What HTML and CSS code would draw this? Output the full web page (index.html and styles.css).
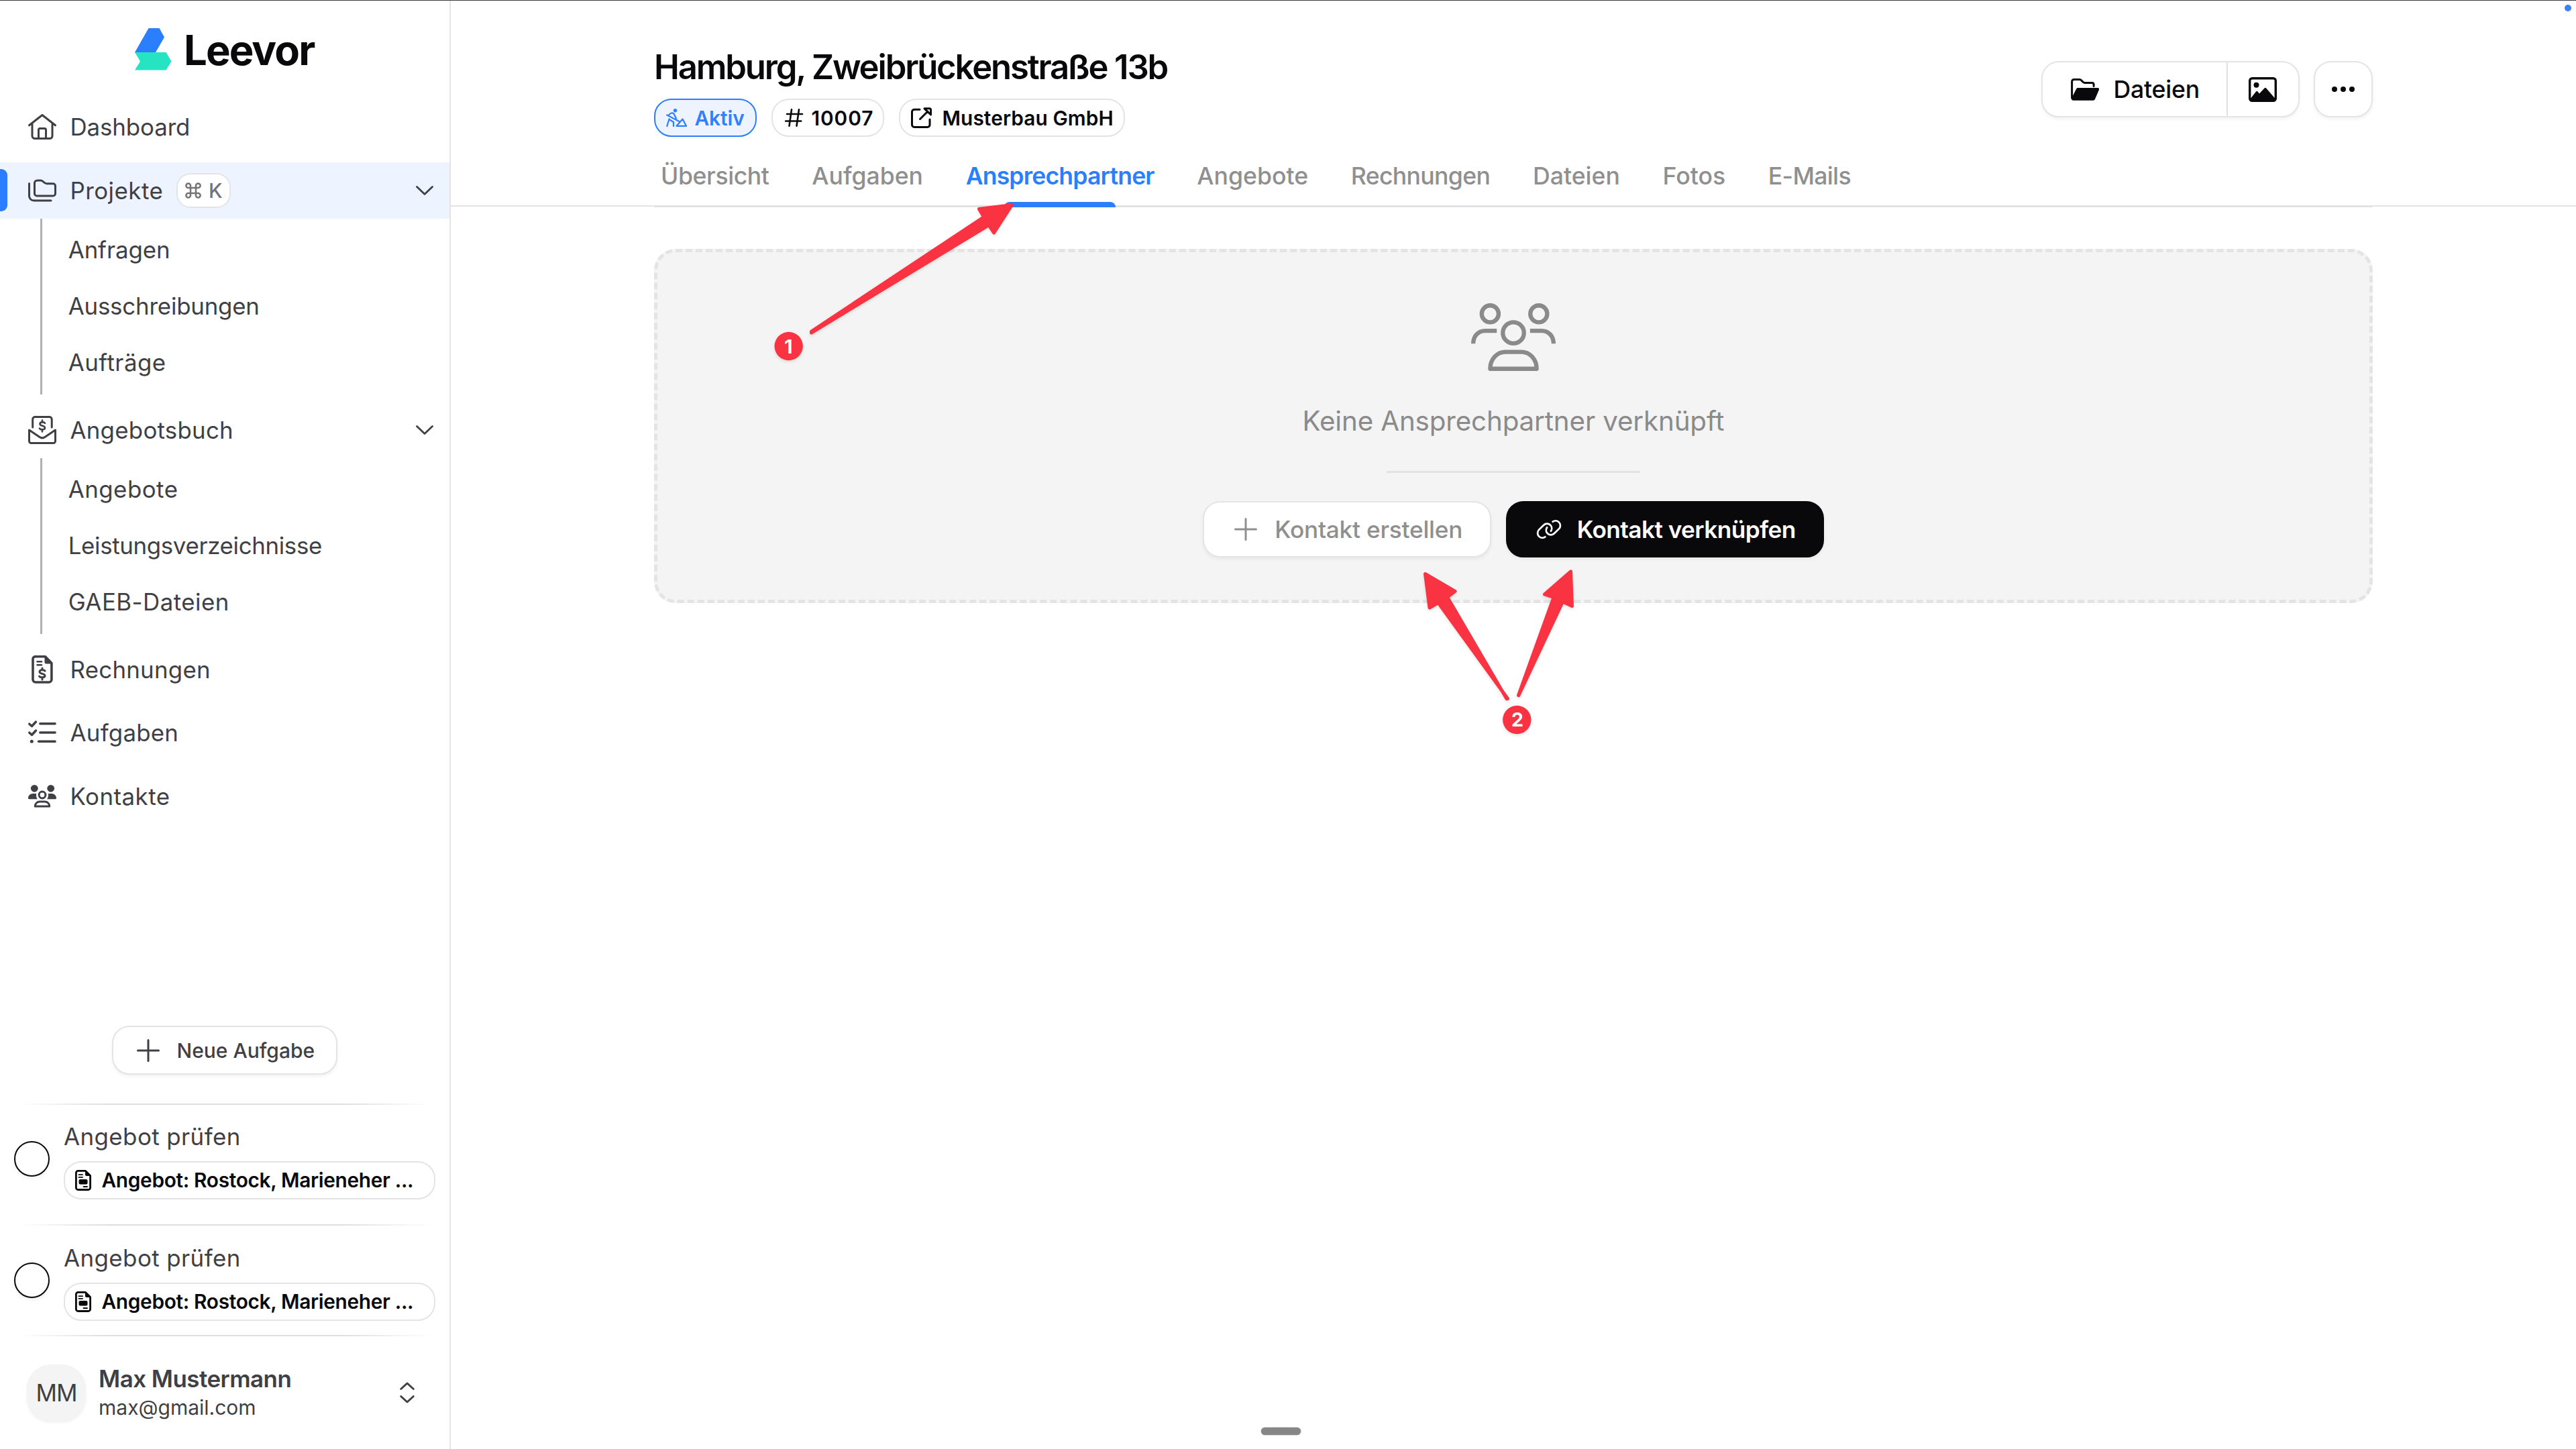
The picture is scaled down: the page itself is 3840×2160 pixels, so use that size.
FILE: index.html
```
<!DOCTYPE html>
<html lang="de">
<head>
<meta charset="utf-8">
<title>Leevor</title>
<link rel="stylesheet" href="styles.css">
</head>
<body>
<svg class="defs" aria-hidden="true">
  <symbol id="i-chevron" viewBox="0 0 26 14"><path d="M1.5 1.5 13 12.5 24.5 1.5"/></symbol>
  <symbol id="i-plus" viewBox="0 0 34 34"><path d="M17 1.5v31M1.5 17h31"/></symbol>
  <symbol id="i-file" viewBox="0 0 24 31">
    <path d="M4 1.4H15.500L22.600 8.500V26.500a3 3 0 0 1-3 3H4.400a3 3 0 0 1-3-3V4.400a3 3 0 0 1 3-3Z"/>
    <path class="solid" d="M15 1v6a2 2 0 0 0 2 2h6Z"/>
    <path d="M5.500 7.200h5.500M5.500 10.900h5.500M12.500 25h5.500" stroke-width="1.800"/>
    <rect class="solid" x="5.500" y="14" width="13" height="7.500" rx="2"/>
  </symbol>
</svg>

<aside class="sidebar">
  <div class="brand">
    <svg class="brand-mark" viewBox="0 0 54.500 62.500">
      <path fill="#2b7fff" d="M20.500 0h16l7.500 13.500L31 36H0Z"/>
      <path fill="#26e3c2" d="M0 36h46.500l8 13.500-8 13H0l8-13Z"/>
    </svg>
    <span class="brand-name">Leevor</span>
  </div>

  <nav class="nav">
    <a class="nav-row">
      <svg class="icon" viewBox="0 0 42 42"><path d="M1.500 18.800 21 3.500l19.500 15.300M6 16v18.500a4 4 0 0 0 4 4h22a4 4 0 0 0 4-4V16M15.500 38V25.500a2 2 0 0 1 2-2h7a2 2 0 0 1 2 2V38"/></svg>
      <span>Dashboard</span>
    </a>
    <div class="nav-group">
      <a class="nav-row active">
        <svg class="icon" viewBox="0 0 42 42"><path d="M1.500 10.500V29a7 7 0 0 0 7 7H34M9.500 10a4 4 0 0 1 4-4h5.500c3.500 0 4.500 4.800 8.500 4.800H37a3.500 3.500 0 0 1 3.500 3.500V25.500a3.500 3.500 0 0 1-3.500 3.500H13a3.500 3.500 0 0 1-3.500-3.500Z"/></svg>
        <span class="track-2">Projekte</span>
        <kbd class="shortcut"><svg class="cmd" viewBox="0 0 24 24"><path d="M8 8H4.800a3.300 3.300 0 1 1 3.200-3.300v14.600A3.300 3.300 0 1 1 4.800 16h14.400a3.300 3.300 0 1 1-3.200 3.300V4.700A3.300 3.300 0 1 1 19.200 8Z"/></svg>K</kbd>
        <svg class="chevron"><use href="#i-chevron"/></svg>
      </a>
      <div class="subnav">
        <a>Anfragen</a>
        <a class="track-0">Ausschreibungen</a>
        <a class="track-2">Aufträge</a>
      </div>
    </div>
    <div class="nav-group">
      <a class="nav-row">
        <svg class="icon" viewBox="0 0 42 42">
          <path d="M6.700 17V5a3.500 3.500 0 0 1 3.500-3.500h21.500A3.500 3.500 0 0 1 35.200 5v12M1.500 21v16.500A3 3 0 0 0 4.500 40.500h33a3 3 0 0 0 3-3V21L25 31.500a7 7 0 0 1-8 0Z"/>
          <path d="M25 10.800c-1-1.800-7.500-2.300-7.500 1.200s7.500 2.200 7.500 5.800-6.700 3-8 .9M21 6.500v2.300M21 21v2.500" stroke-width="2.600"/>
        </svg>
        <span class="track-1">Angebotsbuch</span>
        <svg class="chevron"><use href="#i-chevron"/></svg>
      </a>
      <div class="subnav">
        <a class="track-2">Angebote</a>
        <a class="track-tight">Leistungsverzeichnisse</a>
        <a class="track-2">GAEB-Dateien</a>
      </div>
    </div>
    <a class="nav-row">
      <svg class="icon" viewBox="0 0 42 42">
        <path d="M9.500 1.800H25.500L34.900 11.500V36a4 4 0 0 1-4 4H11a4 4 0 0 1-4-4V5.500a3.700 3.700 0 0 1 3.700-3.700Z" stroke-width="3.600"/>
        <path class="solid" d="M24.500 1v9a2.500 2.500 0 0 0 2.500 2.500h9Z"/>
        <path d="M13.500 9.300h6.500M13.500 14.300h6.500" stroke-width="2.600"/>
        <path d="M25 23.200c-1-2-8-2.500-8 1.200s8 2.200 8 5.800-7 3-8.500.9M21 19v2M21 34v2" stroke-width="3"/>
      </svg>
      <span class="track-1">Rechnungen</span>
    </a>
    <a class="nav-row">
      <svg class="icon" viewBox="0 0 42 42">
        <path d="M17.800 7.800h22.300M17.800 21h22.300M15.500 34.200h24.600M1.800 8.200l3.700 3.300 6-6.500M1.800 21.200l3.700 3.300 6-6.500" stroke-width="3.500"/>
        <circle class="solid" cx="5.300" cy="34.200" r="2.500"/>
      </svg>
      <span class="track-1">Aufgaben</span>
    </a>
    <a class="nav-row">
      <svg class="icon" viewBox="0 0 42 42">
        <circle class="solid" cx="9.300" cy="9.300" r="5.400"/><circle class="solid" cx="33.700" cy="9.300" r="5.400"/>
        <path class="solid" d="M1.300 25.200C.3 25.200 0 24.600 0 24c0-4 3-7 7-7h5.200c-.8 3.500.2 6 1.700 8.200ZM40.700 25.200c1 0 1.300-.6 1.300-1.200 0-4-3-7-7-7h-5.200c.8 3.500-.2 6-1.700 8.200Z"/>
        <circle cx="21" cy="19" r="4.900"/>
        <path d="M10.300 36c0-4 3-7 7-7h7.400c4 0 7 3 7 7Z"/>
      </svg>
      <span class="track-2">Kontakte</span>
    </a>
  </nav>

  <div class="tasks">
    <button class="btn new-task"><svg class="plus"><use href="#i-plus"/></svg>Neue Aufgabe</button>
    <div class="task">
      <span class="check"></span>
      <div class="task-body">
        <span class="task-title">Angebot prüfen</span>
        <span class="pill doc"><svg><use href="#i-file"/></svg>Angebot: Rostock, Marieneher ...</span>
      </div>
    </div>
    <div class="task last">
      <span class="check"></span>
      <div class="task-body">
        <span class="task-title">Angebot prüfen</span>
        <span class="pill doc"><svg><use href="#i-file"/></svg>Angebot: Rostock, Marieneher ...</span>
      </div>
    </div>
    <div class="user">
      <span class="avatar">MM</span>
      <div class="user-text">
        <span class="user-name">Max Mustermann</span>
        <span class="user-mail">max@gmail.com</span>
      </div>
      <svg class="updown" viewBox="0 0 22 32"><path d="M1.700 10.500 11 2l9.300 8.500M1.700 21.500 11 30l9.300-8.500"/></svg>
    </div>
  </div>
</aside>

<main class="main">
  <header class="header">
    <div class="container head-row">
      <div>
        <h1 class="title">Hamburg, Zweibrückenstraße 13b</h1>
        <div class="pills">
          <span class="pill status">
            <svg viewBox="0 0 31 27"><circle class="solid" cx="13.500" cy="2.800" r="2.700"/><path d="M3.500 10C5.500 6.700 9 5.500 11.300 7.300L15 14.500M1.200 9.500 19 18.700M4.500 15.500 1.300 26M5.500 16.500 11 20v6M15.500 25.800 24.500 15.500 30 25.800Z"/></svg>Aktiv</span>
          <span class="pill number">
            <svg viewBox="0 0 27 27"><path d="M10 1.300 6.500 25.700M21 1.300 17.500 25.700M3 8h23M1.200 18.500h23"/></svg>10007</span>
          <span class="pill customer">
            <svg viewBox="0 0 31 31"><path d="M13 3.300H5a3.500 3.500 0 0 0-3.500 3.500V26a3.500 3.500 0 0 0 3.500 3.500H24.500A3.500 3.500 0 0 0 28 26V18M13.500 17.500 25 6M20 1.800h8a1.500 1.500 0 0 1 1.500 1.500V11Z"/></svg>Musterbau GmbH</span>
        </div>
      </div>
      <div class="actions">
        <div class="btn split">
          <span class="seg files"><svg viewBox="0 0 42 33"><path d="M1.600 29V4.500a3 3 0 0 1 3-3h8.500c3.500 0 4 5 7.500 5h11a2.500 2.500 0 0 1 2.500 2.500v2.500"/><path class="solid" d="M10.500 14H40c1.700 0 2.500 1.400 2 2.800l-6 14c-.5 1.300-1.500 2-3 2H4C1.500 32.800.3 31 1 29.500L8 15.700C8.500 14.500 9.300 14 10.500 14Z"/></svg>Dateien</span>
          <span class="seg image"><svg viewBox="0 0 42 37"><rect x="1.700" y="1.700" width="38.600" height="33.600" rx="3.500"/><circle class="solid" cx="11.500" cy="11.700" r="4"/><path class="solid" d="M2 33 11 21.500c.7-1 1.800-1 2.500 0L16 24.500 23.500 16.500c.8-1 2-1 2.700 0L40 32.500V35H3Z"/></svg></span>
        </div>
        <div class="btn more"><i></i><i></i><i></i></div>
      </div>
    </div>
    <nav class="container tabs">
      <a class="tab t1">Übersicht</a>
      <a class="tab">Aufgaben</a>
      <a class="tab current">Ansprechpartner</a>
      <a class="tab">Angebote</a>
      <a class="tab t2">Rechnungen</a>
      <a class="tab">Dateien</a>
      <a class="tab">Fotos</a>
      <a class="tab t2">E-Mails</a>
    </nav>
  </header>

  <section class="container empty">
    <svg class="empty-icon" viewBox="0 0 640 512"><circle cx="144" cy="80" r="64"/><circle cx="512" cy="80" r="64"/><circle cx="320" cy="224" r="80"/><path d="M16 306C16 246 56 208 106 208H194M624 306C624 246 584 208 534 208H446"/><path d="M144 496C144 425 194 368 260 368H380C446 368 496 425 496 496Z"/></svg>
    <p class="empty-text">Keine Ansprechpartner verknüpft</p>
    <hr class="divider">
    <div class="empty-actions">
      <button class="btn create"><svg class="plus"><use href="#i-plus"/></svg>Kontakt erstellen</button>
      <button class="btn link"><svg viewBox="0 0 640 512"><path d="M411 75c46-34 108-28 147 11 44 44 44 116 0 160L445 357c-44 44-115 44-159 0-39-39-44-100-12-145M229 437c-46 34-108 28-147-11-44-44-44-116 0-160L195 155c44-44 115-44 159 0 39 39 44 100 12 145"/></svg>Kontakt verknüpfen</button>
    </div>
  </section>
</main>

<svg class="annotations" viewBox="0 0 3840 2160">
  <g class="arrow">
    <path d="M1209.500 494 1466.500 323.500 1459.500 311.500 1508.500 305.500 1481.700 347 1474 335.500 1209.500 496Z"/>
    <path d="M2246 1041.700 2157.500 890 2169 881.500 2124.500 855.500 2131 906 2144 898.500 2247.500 1041.500Z"/>
    <path d="M2263.500 1036.500 2316 890.500 2302.500 886 2341.500 852 2343.500 903.500 2329.500 897 2263.800 1036.700Z"/>
  </g>
  <circle cx="1175.700" cy="516" r="21.200"/><circle cx="2261.300" cy="1073" r="21.200"/>
  <text x="1175.200" y="526.500">1</text><text x="2261.800" y="1083.300">2</text>
</svg>
<span class="dot"></span>
<span class="handle"></span>
</body>
</html>
```
FILE: styles.css
```
* { box-sizing: border-box; }

body {
  margin: 0;
  width: 3840px;
  height: 2160px;
  overflow: hidden;
  position: relative;
  display: flex;
  border-top: 1px solid #3a3840;
  background: #fff;
  color: #09090b;
  font-family: Inter, "Liberation Sans", sans-serif;
}

svg { display: block; flex: none; fill: none; stroke: currentColor; stroke-width: 3; stroke-linecap: round; stroke-linejoin: round; overflow: visible; }
.solid { fill: currentColor; stroke: none; }
.defs { position: absolute; width: 0; height: 0; }

button { margin: 0; font-family: inherit; color: inherit; }

.btn {
  display: flex;
  align-items: center;
  padding: 0;
  background: #fff;
  border: 2.6px solid #e4e4e7;
  border-radius: 26px;
  box-shadow: 0 3px 5px rgba(0, 0, 0, .05);
  white-space: nowrap;
}

.pill {
  display: flex;
  align-items: center;
  height: 57px;
  border: 2.6px solid #e4e4e7;
  border-radius: 26px;
  background: #fff;
  font-size: 29.8px;
  font-weight: 600;
  white-space: nowrap;
}

/* Sidebar */
.sidebar {
  width: 672px;
  flex: none;
  display: flex;
  flex-direction: column;
  border-right: 2px solid #e4e4e7;
  color: #3f3f46;
}

.brand { display: flex; height: 146px; padding: 41px 0 0 201px; gap: 18.5px; }
.brand-mark { width: 54.5px; height: 62.5px; stroke: none; }
.brand-name { font-size: 61.6px; font-weight: 700; line-height: 65px; letter-spacing: -.031em; color: #09090b; }

.nav { display: flex; flex-direction: column; gap: 10.4px; font-size: 34.8px; letter-spacing: -.002em; }
.nav-row { position: relative; display: flex; align-items: center; height: 84.2px; padding: 0 24px 0 42px; }
.nav-row .icon { width: 42px; height: 42px; margin-right: 20.5px; }
.nav-row.active { background: #edf3ff; }
.nav-row.active::before { content: ""; position: absolute; left: 0; top: 10.5px; width: 10.5px; height: 63px; border-radius: 0 9px 9px 0; background: #2b7fff; }
.chevron { width: 26px; height: 14px; margin-left: auto; stroke-width: 2.8; }
.track-tight { letter-spacing: -.009em; }
.track-0 { letter-spacing: -.005em; }
.track-1 { letter-spacing: .008em; }
.track-2 { letter-spacing: .0145em; }

.shortcut {
  display: flex; align-items: center; justify-content: center; gap: 11px;
  width: 81px; height: 52px; margin-left: 20px;
  border: 2.4px solid #e4e4e7; border-radius: 21px; background: #fff;
  font: 500 30px Inter, sans-serif; color: #737378;
}
.cmd { width: 24px; height: 24px; stroke-width: 2.5; }

.subnav { display: flex; flex-direction: column; margin-left: 60px; padding: 4.4px 0 6px 38.7px; border-left: 3px solid #b0b0b2; }
.subnav a { height: 84px; line-height: 84px; }

.tasks { margin-top: auto; display: flex; flex-direction: column; }
.new-task { align-self: flex-start; width: 336px; height: 73px; margin: 0 0 43px 167px; padding-left: 34.5px; gap: 26px; font-size: 30px; font-weight: 500; }
.plus { width: 34px; height: 34px; }

.task, .user { position: relative; display: flex; }
.task::before, .user::before {
  content: ""; position: absolute; left: 26px; right: 24px; top: 0; height: 2.4px;
  background: linear-gradient(90deg, transparent, #dedee1 22%, #dedee1 78%, transparent);
}
.task { height: 180px; padding: 22px 0 0 21px; gap: 21px; }
.task.last { height: 165px; padding-top: 23px; }
.check { width: 53px; height: 53px; margin-top: 34px; flex: none; border: 2.4px solid #09090b; border-radius: 50%; box-shadow: 0 3px 5px rgba(0, 0, 0, .06); }
.task-body { display: flex; flex-direction: column; gap: 8.5px; }
.task-title { height: 55px; line-height: 55px; font-size: 34.9px; letter-spacing: .012em; }
.doc { width: 554px; padding-left: 14.5px; gap: 16px; color: #09090b; letter-spacing: -.0105em; }
.doc svg { width: 24px; height: 31px; stroke-width: 2.8; }

.user { height: 170px; padding: 44px 52px 0 40px; }
.avatar { width: 88px; height: 85px; border-radius: 36px; background: #f4f4f5; text-align: center; line-height: 84px; font-size: 34.9px; letter-spacing: -.03em; box-shadow: 0 2px 4px rgba(0, 0, 0, .06); }
.user-text { display: flex; flex-direction: column; margin-left: 19px; }
.user-name { line-height: 42px; font-size: 34.9px; font-weight: 600; letter-spacing: -.0148em; }
.user-mail { margin-top: 1px; line-height: 43px; font-size: 30px; }
.updown { width: 22px; height: 32px; margin: 26px 0 0 auto; }

/* Project header */
.main { flex: 1; min-width: 0; display: flex; flex-direction: column; }
.container { width: 2562px; margin-left: 303px; }
.header { height: 307px; border-bottom: 2px solid #e4e4e7; }
.head-row { display: flex; justify-content: space-between; }
.title { margin: 69px 0 17px; font-size: 50.8px; font-weight: 600; line-height: 60px; letter-spacing: -.0425em; }
.pills { display: flex; gap: 22px; }
.status { width: 153px; padding-left: 15.5px; gap: 12px; background: #edf3ff; border-color: #2b7fff; color: #3080ff; letter-spacing: -.002em; }
.status svg { width: 31px; height: 27px; stroke-width: 2.3; }
.number { width: 168px; padding-left: 17.5px; gap: 13px; letter-spacing: .0311em; }
.number svg { width: 27px; height: 27px; stroke-width: 2.6; }
.customer { width: 337px; padding-left: 16px; gap: 15.5px; letter-spacing: .003em; }
.customer svg { width: 31px; height: 31px; }

.actions { display: flex; gap: 21.5px; margin-top: 90.3px; }
.actions .btn { height: 83.5px; }
.split { width: 384.5px; }
.seg { display: flex; align-items: center; height: 100%; }
.files { width: 276px; padding-left: 41.5px; gap: 22px; border-right: 2px solid #e0e0e3; font-size: 35.6px; font-weight: 500; letter-spacing: -.005em; }
.files svg { width: 42px; height: 33px; }
.image { flex: 1; justify-content: center; }
.image svg { width: 42px; height: 37px; stroke-width: 3.4; }
.more { width: 88px; justify-content: center; gap: 5px; }
.more i { width: 8.3px; height: 8.3px; border-radius: 50%; background: #09090b; }

.tabs { display: flex; align-items: center; gap: 63.7px; height: 96px; margin-top: 9px; padding: 6.4px 0 0 10px; border-bottom: 3px solid #e2e2e4; }
.tab { position: relative; font-size: 35.6px; font-weight: 500; line-height: 86px; color: #8f8f8f; white-space: nowrap; }
.t1 { letter-spacing: -.0112em; }
.t2 { letter-spacing: -.018em; }
.tab.current { color: #2b7fff; font-weight: 600; letter-spacing: -.0235em; }
.tab.current::after { content: ""; position: absolute; left: 50%; bottom: -3px; width: 166px; height: 8px; margin-left: -83px; border-radius: 8px 8px 0 0; background: #2b7fff; }

/* Empty state */
.empty { display: flex; flex-direction: column; align-items: center; height: 528px; margin-top: 63px; padding-top: 76px; border: 5px dashed #e4e4e7; border-radius: 32px; background: #f4f4f4; color: #8a8a8a; }
.empty-icon { width: 126px; height: 101px; stroke-width: 32; }
.empty-icon path:first-of-type { stroke-linecap: butt; }
.empty-text { margin: 47px 0 46px; font-size: 40.3px; line-height: 56px; letter-spacing: -.003em; }
.divider { width: 378px; height: 3px; margin: 0; border: 0; background: #e2e2e4; }
.empty-actions { display: flex; gap: 22px; margin-top: 41.7px; }
.empty-actions .btn { height: 84.3px; font-size: 35.2px; }
.create { width: 430.4px; padding-left: 45.5px; gap: 26px; font-weight: 500; letter-spacing: -.006em; color: #8f8f8f; }
.btn.link { width: 474px; padding-left: 41.5px; gap: 22px; background: #09090b; border-color: #09090b; color: #fff; font-weight: 600; letter-spacing: -.0158em; }
.link svg { width: 40px; height: 32px; stroke-width: 44; }

/* Callouts over the page */
.annotations { position: absolute; left: 0; top: -1px; width: 3840px; height: 2160px; fill: #fa3343; stroke: none; filter: drop-shadow(0 2px 2px rgba(0, 0, 0, .12)); }
.arrow { stroke: #fa3343; stroke-width: 5; }
.annotations text { fill: #fff; font-size: 29px; font-weight: 700; text-anchor: middle; }

.dot { position: absolute; left: 3823px; top: 6px; width: 10px; height: 10px; border-radius: 50%; background: #3f7ff8; }
.handle { position: absolute; left: 1880px; top: 2127px; width: 59px; height: 11px; border-radius: 6px; background: #868686; box-shadow: 0 0 0 1px rgba(0, 0, 0, .15); }
```
